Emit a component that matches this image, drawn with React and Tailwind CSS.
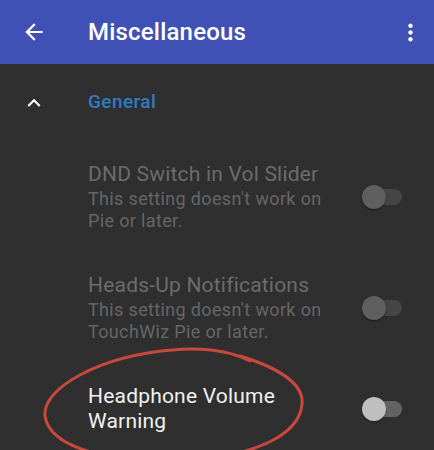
import { MdArrowBack, MdMoreVert, MdKeyboardArrowUp } from 'react-icons/md';

/**
 * Settings screen: "Miscellaneous" with a collapsible General section
 * and a few switch preferences. A hand-drawn red circle sits on top.
 */

const items = [
  {
    id: 'dnd',
    title: 'DND Switch in Vol Slider',
    summary: ["This setting doesn't work on", 'Pie or later.'],
    enabled: false,
  },
  {
    id: 'headsup',
    title: 'Heads-Up Notifications',
    summary: ["This setting doesn't work on", 'TouchWiz Pie or later.'],
    enabled: false,
  },
  {
    id: 'hpwarn',
    title: ['Headphone Volume', 'Warning'],
    summary: null,
    enabled: true,
  },
];

function Toggle({ enabled }) {
  return (
    <div className="relative w-[40px] h-[24px] shrink-0">
      <div
        className={`absolute left-[4px] right-0 top-[4px] h-[16px] rounded-full ${
          enabled ? 'bg-[#636363]' : 'bg-[#454545]'
        }`}
      />
      <div
        className={`absolute left-0 top-0 w-[24px] h-[24px] rounded-full shadow-[0_1px_2px_rgba(0,0,0,0.45)] ${
          enabled ? 'bg-[#bfbfbf]' : 'bg-[#5f5f5f]'
        }`}
      />
    </div>
  );
}

function SwitchRow({ item }) {
  const titleLines = Array.isArray(item.title) ? item.title : [item.title];

  return (
    <div className="flex items-center pl-[88px] pr-[32px] pt-[21px] pb-[20px]">
      <div className="flex-1">
        {titleLines.map((line) => (
          <div
            key={line}
            className={`text-[21px] tracking-[0.2px] ${item.summary ? 'leading-[24px]' : 'leading-[25px]'} ${
              item.enabled ? 'text-[#f2f2f2]' : 'text-[#6c6c6c]'
            }`}
          >
            {line}
          </div>
        ))}
        {item.summary && (
          <div className="mt-[2px] text-[18px] leading-[22px] tracking-[0.35px] text-[#666666]">
            {item.summary.map((line) => (
              <div key={line}>{line}</div>
            ))}
          </div>
        )}
      </div>
      <Toggle enabled={item.enabled} />
    </div>
  );
}

export default function App() {
  return (
    <div
      className="relative w-[434px] h-[450px] overflow-hidden bg-[#2f2f2f]"
      style={{ fontFamily: 'Roboto, "Noto Sans", sans-serif' }}
    >
      {/* App bar */}
      <div className="flex items-center h-[64px] bg-[#3f51b5] text-white">
        <div className="w-[88px] flex items-center justify-center pr-[20px]">
          <MdArrowBack size={26} />
        </div>
        <div className="flex-1 text-[24px] font-medium tracking-[0.2px]">Miscellaneous</div>
        <div className="w-[52px] flex items-center justify-center pl-[4px]">
          <MdMoreVert size={27} />
        </div>
      </div>

      {/* Category header */}
      <div className="flex items-center h-[77px]">
        <div className="w-[88px] flex items-center justify-center pr-[20px] text-white">
          <MdKeyboardArrowUp size={26} />
        </div>
        <div className="text-[19px] font-medium tracking-[0.4px] text-[#2f7cc2]">General</div>
      </div>

      {items.map((item) => (
        <SwitchRow key={item.id} item={item} />
      ))}

      {/* hand-drawn annotation */}
      <svg
        className="absolute inset-0 pointer-events-none"
        width="434"
        height="450"
        viewBox="0 0 434 450"
        fill="none"
      >
        <path
          d="M240 356 C276 367 304 383 302 404 C300 430 268 452 198 460 C128 466 50 452 45 416 C42 388 100 356 172 350 C206 347 232 352 250 361"
          stroke="#c9483d"
          strokeWidth="3"
          strokeLinecap="round"
        />
      </svg>
    </div>
  );
}
